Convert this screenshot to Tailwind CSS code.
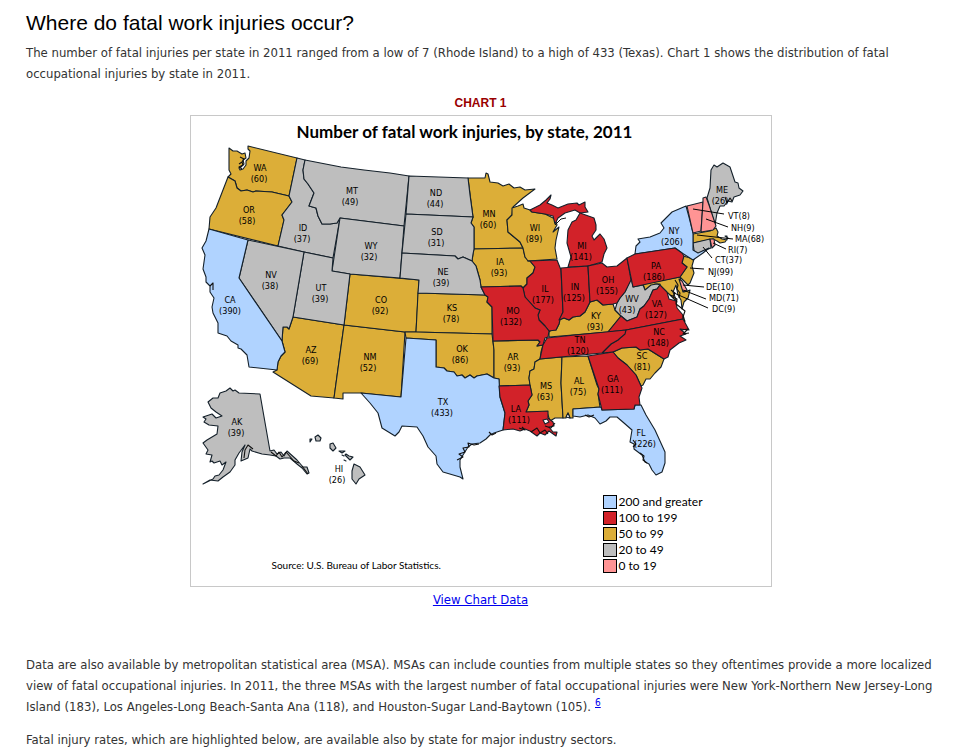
<!DOCTYPE html>
<html lang="en">
<head>
<meta charset="utf-8">
<meta name="viewport" content="width=device-width, initial-scale=1">
<title>Where do fatal work injuries occur?</title>
<script src="https://cdn.jsdelivr.net/npm/@tailwindcss/browser@4"></script>
</head>
<body class="bg-white">
<main class="px-[26px] pt-[9px] font-['DejaVu_Sans_Condensed',Verdana,sans-serif] text-[13px] leading-[21px] text-[#333]">
  <h1 class="font-['Liberation_Sans',Arial,sans-serif] text-[21px] leading-7 text-black">Where do fatal work injuries occur?</h1>
  <p class="mt-[5px]">The number of fatal injuries per state in 2011 ranged from a low of 7 (Rhode Island) to a high of 433 (Texas). Chart 1 shows the distribution of fatal occupational injuries by state in 2011.</p>
  <h2 class="mt-[9px] text-center font-['Liberation_Sans',Arial,sans-serif] text-[12px] font-bold text-[#900]">CHART 1</h2>
  <figure class="mx-auto mt-px w-full max-w-[582px] border border-[#c8c8c8] pt-1 pb-3 font-[Lato,sans-serif] text-black">
    <figcaption class="pr-8 text-center text-[17px] leading-6 font-bold">Number of fatal work injuries, by state, 2011</figcaption>
    <svg class="block w-full" viewBox="191 144 580 350" role="img" aria-label="Map of fatal work injuries by state">
      <g stroke="#14202a" stroke-width="1.1" stroke-linejoin="round">
        <g fill="#dcae38">
          <path d="M229 148L233 151 237 151 242 154 245 153 246 158 243 160 244 164 241 167 239 168 240 170 243 169 246 165 246 161 249 158 250 151 248 149 248 146 297 158 289 196 272 192 256 191 253 192 247 190 241 191 237 188 235 181 228 177 231 174 229 170Z"/>
          <path d="M228 177L235 181 237 188 241 191 247 190 253 192 256 191 272 192 289 196 292 202 282 215 284 220 278 246 209 229 210 217 216 208Z"/>
          <path d="M293 317L344 325 334 398 311 396 273 372 277 370 278 362 281 356 285 352 282 341 283 327 287 327 289 329Z"/>
          <path d="M344 325L405 332 401 397 361 393 343 393 343 399 334 398Z"/>
          <path d="M350 274L419 280 416 332 405 332 344 325Z"/>
          <path d="M418 293L485 295 488 297 487 302 492 307 492 334 416 332Z"/>
          <path d="M405 332L416 332 492 334 494 350 494 378 487 374 477 376 474 378 470 375 465 378 462 375 457 376 454 372 447 371 444 368 436 367 436 340 406 338Z"/>
          <path d="M468 178L485 178 486 173 488 174 490 182 498 183 503 186 509 184 514 188 520 187 525 190 535 189 523 198 513 207 512 215 507 220 508 232 520 242 523 248 474 249 474 227 471 223 473 217Z"/>
          <path d="M474 249L523 248 525 257 530 261 535 267 533 273 527 278 527 284 523 288 521 286 481 287 480 280 476 266 472 261 473 254Z"/>
          <path d="M512 208L518 206 523 204 524 208 530 210 532 212 545 214 555 219 557 225 553 232 559 227 556 240 555 248 557 259 528 261 525 257 523 248 520 242 508 232 507 220 512 215Z"/>
          <path d="M493 341L538 340 540 342 537 346 543 345 541 352 540 359 535 362 534 369 530 371 529 378 530 385 499 386 499 379 494 378 494 350Z"/>
          <path d="M540 359L562 357 561 383 563 418 555 418 550 421 547 412 526 412 529 405 528 401 532 395 530 385 529 378 530 371 534 369 535 362Z"/>
          <path d="M562 357L588 356 597 385 599 389 598 394 600 407 573 409 573 418 570 418 568 413 566 418 563 418 561 383Z"/>
          <path d="M613 352L622 348 636 347 640 350 648 349 664 359 661 367 655 373 650 379 646 379 643 385 641 386 636 375 627 365 618 358Z"/>
          <path d="M549 337L549 332 551 330 556 330 559 324 559 320 564 318 569 320 573 317 580 316 585 312 590 302 597 300 603 305 613 304 615 310 621 316 608 332Z"/>
          <path d="M683 256L694 259 692 266 694 273 690 283 688 285 683 280 680 277 687 267 682 263Z"/>
          <path d="M643 284L680 277 684 292 690 290 688 298 684 302 682 309 681 300 678 295 676 285 673 292 677 302 672 297 668 293 660 289 660 284 655 284 645 290Z"/>
          <path d="M693 234L710 231 716 228 718 232 717 236 722 239 727 240 727 236 725 236 728 238 725 242 720 243 717 241 713 239 693 243Z"/>
        </g>
        <g fill="#bebebe">
          <path d="M297 158L305 160 303 170 304 179 308 184 314 193 309 206 316 208 318 216 322 224 330 224 337 223 340 218 333 258 304 252 278 246 284 220 282 215 292 202 289 196Z"/>
          <path d="M305 160L341 167 364 170 390 173 409 176 404 226 340 218 337 223 330 224 322 224 318 216 316 208 309 206 314 193 308 184 304 179 303 170Z"/>
          <path d="M340 218L404 226 400 278 350 274 332 271Z"/>
          <path d="M304 252L333 258 332 271 350 274 344 325 293 317Z"/>
          <path d="M248 240L304 252 293 317 289 329 287 327 283 327 282 341 239 278Z"/>
          <path d="M409 176L468 178 470 195 473 217 406 214Z"/>
          <path d="M406 214L473 217 471 223 474 227 474 249 473 254 472 261 463 257 458 259 455 256 402 253Z"/>
          <path d="M402 253L455 256 458 259 463 257 472 261 476 266 480 280 481 287 485 295 418 293 419 280 400 278Z"/>
          <path d="M631 278L633 287 643 285 645 290 651 285 657 284 660 285 657 289 653 290 649 299 644 306 640 309 637 317 627 321 621 316 615 310 617 303 620 298 625 292Z"/>
          <path d="M707 198L710 188 711 170 714 165 717 167 723 163 730 167 735 182 738 183 739 188 743 191 740 195 734 197 732 202 728 201 724 206 720 206 717 213 715 225Z"/>
          <path d="M693 243L710 239 711 248 703 251 695 257Z"/>
          <path d="M208 402L213 398 218 398 220 393 226 391 230 388 233 391 235 390 239 393 260 394 270 451 274 450 277 454 281 452 284 456 287 451 297 460 303 467 307 467 309 473 307 474 302 468 297 464 290 458 284 458 280 459 276 456 270 455 262 454 252 451 250 449 248 458 241 461 242 452 245 445 239 453 235 460 235 465 230 472 223 477 218 481 210 480 203 484 213 479 215 476 219 475 223 470 226 462 222 465 220 461 214 463 212 461 210 462 212 455 206 454 208 450 203 443 207 440 217 434 218 426 209 425 204 422 206 419 203 417 212 414 216 418 222 416 216 412 211 408Z"/>
          <path d="M310 439l2 0-2 3zM315 437l3-2 3 3-1 3-4 0zM330 444l3-1 3 5-3 3-3-3zM339 451l6 0-3 2zM342 455l2 1zM346 454l3 2 4 1-3 3-2-2-3-3zM344 460l2 1zM354 464l6 3 5 8-6 4-3 5-4-5 0-8z"/>
        </g>
        <g fill="#b0d3ff">
          <path d="M209 229L248 240 239 278 282 341 285 352 281 356 278 362 277 370 249 367 247 355 241 349 238 348 238 345 231 341 227 336 218 333 218 323 213 313 212 307 214 298 210 292 210 286 206 282 206 277 203 269 205 255 202 248 206 241Z"/>
          <path d="M406 338L436 340 436 367 444 368 447 371 454 372 457 376 462 375 465 378 470 375 474 378 477 376 487 374 494 378 499 379 500 397 505 413 503 430 494 433 490 435 486 439 480 443 472 444 468 447 463 455 460 460 460 467 463 479 460 477 443 472 437 464 436 456 428 447 423 436 417 427 402 426 399 432 395 436 382 428 378 413 370 403 361 393 401 397Z"/>
          <path d="M573 409L601 407 602 410 634 409 635 405 641 405 646 415 655 430 665 452 665 463 662 472 656 475 652 470 649 464 645 462 642 455 634 449 634 444 630 442 632 430 624 423 617 417 610 417 606 421 600 424 595 418 588 415 580 417 573 416Z"/>
          <path d="M635 254L636 246 640 242 638 239 650 237 660 233 664 228 661 223 672 212 686 206 689 217 693 233 693 250 698 253 709 248 703 253 693 260 682 253 675 248Z"/>
        </g>
        <g fill="#d22229">
          <path d="M530 210L540 205 546 200 551 195 550 199 547 203 552 205 558 208 568 204 577 203 579 205 585 202 585 207 588 212 580 213 575 210 565 213 558 218 555 224 553 216 545 214 532 212Z"/>
          <path d="M580 213L594 218 596 225 596 230 592 236 594 240 600 234 604 239 607 248 604 254 602 262 588 266 568 267 571 257 567 243 568 230 572 222 576 220Z"/>
          <path d="M528 261L557 260 561 270 563 312 560 320 559 324 556 330 549 331 545 326 539 320 538 315 540 310 535 308 525 297 523 288 527 284 527 278 533 273 535 267 530 261Z"/>
          <path d="M481 287L521 286 523 288 525 297 535 308 540 310 538 315 539 320 545 326 549 331 548 337 545 338 543 345 537 346 540 342 538 340 493 341 492 307 487 302 488 297 485 295Z"/>
          <path d="M561 268L588 266 590 302 585 312 580 316 573 317 569 320 564 318 559 320 563 312Z"/>
          <path d="M588 266L602 263 607 267 617 266 627 258 631 280 625 292 620 298 617 303 613 304 603 305 597 300 590 302Z"/>
          <path d="M627 258L635 254 675 248 682 253 684 256 682 263 687 267 680 277 633 287Z"/>
          <path d="M608 332L621 316 627 321 637 317 640 309 644 306 649 299 653 290 657 289 660 285 667 292 669 299 676 301 677 308 683 315 683 319 626 330Z"/>
          <path d="M626 330L683 319 689 330 680 329 686 334 680 336 686 340 679 343 670 350 668 357 664 359 648 349 640 350 636 347 622 348 613 352 602 353 611 344 618 340Z"/>
          <path d="M547 338L575 335 626 330 625 334 618 340 611 344 602 353 540 359 543 345Z"/>
          <path d="M588 356L613 352 618 358 627 365 636 375 641 386 642 388 639 397 640 405 635 405 634 409 602 410 598 394 599 389Z"/>
          <path d="M499 386L530 385 532 395 528 401 529 405 526 412 548 411 548 418 553 422 554 426 549 427 553 432 557 432 556 436 549 431 545 435 540 433 537 436 530 431 525 429 520 431 513 429 503 430 505 413 500 397Z"/>
        </g>
        <g fill="#ff9494">
          <path d="M687 206L703 202 701 231 693 233Z"/>
          <path d="M703 198L706 197 709 205 716 226 713 230 701 232 703 202Z"/>
          <path d="M710 239L714 239 715 245 712 248Z"/>
          <path d="M679 279L682 281 687 290 683 292Z"/>
        </g>
        <!-- inlets, sounds and barrier islands -->
        <g fill="none" stroke="#111">
          <path d="M239 164l3-2 1 3-4 2 3 2M240 157l4 2-2 3M210 286l3-3 0 7M683 315l2 7M680 307l5 4-2 6 2 4M671 290l4 3-2 4 4 2-1 5 4 3M675 280l3 5-1 4 3 4-1 5M457 460l6-3-4-3 6-2-2-4 6-1-1-4 6 2 5-1M489 432l3 3 4-2M519 428l6 2-3-3M531 432l6-4 3 5 5-3 3 4M545 426l6 2 4-5M633 440l3 4-3 3M640 453l4 3-1 4 4 3M585 415l4 2 5-2M682 330l6-1-5 5 6-1M253 449l-5-4-3 5-1 8M271 452l5 4 3-4 3 5 4-5M286 452l8 9 5 2M302 466l6 8M670 295l3 1M725 197l2 6 3-5 2 3"/>
          <path d="M555 225l6-6 5-1" stroke-width="1"/>
        </g>
        <path d="M543 420l4-1 2 3-4 2zM566 417l2-4 2 5z" fill="#fff"/>
        <g fill="none" stroke="#050505" stroke-width="1">
          <path d="M693 209L724 214M706 219L728 227M697 235L733 239M713 243L726 249M703 247L712 258M690 268L704 269M683 285L704 287M683 290L706 299M674 293L708 308"/>
        </g>
      </g>
      <g class="font-['DejaVu_Sans_Condensed','Noto_Sans',Tahoma,sans-serif] text-[9px]" fill="#000" text-anchor="middle">
        <text x="260" y="171">WA<tspan x="259" y="182">(60)</tspan></text>
        <text x="249" y="213">OR<tspan x="247" y="224">(58)</tspan></text>
        <text x="303" y="231">ID<tspan x="302" y="242">(37)</tspan></text>
        <text x="352" y="194">MT<tspan x="350" y="205">(49)</tspan></text>
        <text x="371" y="249">WY<tspan x="369" y="260">(32)</tspan></text>
        <text x="271" y="278">NV<tspan x="270" y="289">(38)</tspan></text>
        <text x="230" y="303">CA<tspan x="230" y="314">(390)</tspan></text>
        <text x="321" y="291">UT<tspan x="320" y="302">(39)</tspan></text>
        <text x="381" y="303">CO<tspan x="380" y="314">(92)</tspan></text>
        <text x="311" y="353">AZ<tspan x="310" y="364">(69)</tspan></text>
        <text x="370" y="360">NM<tspan x="368" y="371">(52)</tspan></text>
        <text x="436" y="196">ND<tspan x="435" y="207">(44)</tspan></text>
        <text x="437" y="235">SD<tspan x="436" y="246">(31)</tspan></text>
        <text x="443" y="275">NE<tspan x="441" y="286">(39)</tspan></text>
        <text x="452" y="311">KS<tspan x="451" y="322">(78)</tspan></text>
        <text x="462" y="352">OK<tspan x="460" y="363">(86)</tspan></text>
        <text x="443" y="405">TX<tspan x="442" y="416">(433)</tspan></text>
        <text x="489" y="217">MN<tspan x="488" y="228">(60)</tspan></text>
        <text x="500" y="265">IA<tspan x="499" y="276">(93)</tspan></text>
        <text x="535" y="231">WI<tspan x="534" y="242">(89)</tspan></text>
        <text x="513" y="314">MO<tspan x="511" y="325">(132)</tspan></text>
        <text x="513" y="360">AR<tspan x="512" y="371">(93)</tspan></text>
        <text x="516" y="412">LA<tspan x="519" y="423">(111)</tspan></text>
        <text x="546" y="389">MS<tspan x="545" y="400">(63)</tspan></text>
        <text x="579" y="384">AL<tspan x="578" y="395">(75)</tspan></text>
        <text x="613" y="382">GA<tspan x="612" y="393">(111)</tspan></text>
        <text x="641" y="436">FL<tspan x="645" y="447">(226)</tspan></text>
        <text x="642" y="359">SC<tspan x="642" y="370">(81)</tspan></text>
        <text x="659" y="335">NC<tspan x="658" y="346">(148)</tspan></text>
        <text x="580" y="343">TN<tspan x="578" y="354">(120)</tspan></text>
        <text x="596" y="319">KY<tspan x="595" y="330">(93)</tspan></text>
        <text x="657" y="307">VA<tspan x="656" y="318">(127)</tspan></text>
        <text x="632" y="302">WV<tspan x="627" y="313">(43)</tspan></text>
        <text x="545" y="292">IL<tspan x="543" y="303">(177)</tspan></text>
        <text x="575" y="290">IN<tspan x="574" y="301">(125)</tspan></text>
        <text x="608" y="283">OH<tspan x="607" y="294">(155)</tspan></text>
        <text x="582" y="249">MI<tspan x="581" y="260">(141)</tspan></text>
        <text x="656" y="269">PA<tspan x="654" y="280">(186)</tspan></text>
        <text x="674" y="234">NY<tspan x="672" y="245">(206)</tspan></text>
        <text x="722" y="193">ME<tspan x="720" y="204">(26)</tspan></text>
        <text x="237" y="425">AK<tspan x="236" y="436">(39)</tspan></text>
        <text x="339" y="472">HI<tspan x="337" y="483">(26)</tspan></text>
        <g text-anchor="start">
          <text x="728" y="219">VT(8)</text>
          <text x="731" y="231">NH(9)</text>
          <text x="735" y="242">MA(68)</text>
          <text x="728" y="253">RI(7)</text>
          <text x="715" y="263">CT(37)</text>
          <text x="708" y="275">NJ(99)</text>
          <text x="706" y="290">DE(10)</text>
          <text x="709" y="301">MD(71)</text>
          <text x="712" y="312">DC(9)</text>
        </g>
      </g>
    </svg>
    <div class="flex items-end justify-between pr-[68px] pl-[81px]">
      <p class="text-[10px] leading-[18px]">Source: U.S. Bureau of Labor Statistics.</p>
      <ul class="text-[12px] leading-4">
        <li class="flex items-center gap-0.5"><span class="size-3.5 border border-black bg-[#b0d3ff]"></span>200 and greater</li>
        <li class="flex items-center gap-0.5"><span class="size-3.5 border border-black bg-[#d22229]"></span>100 to 199</li>
        <li class="flex items-center gap-0.5"><span class="size-3.5 border border-black bg-[#dcae38]"></span>50 to 99</li>
        <li class="flex items-center gap-0.5"><span class="size-3.5 border border-black bg-[#bebebe]"></span>20 to 49</li>
        <li class="flex items-center gap-0.5"><span class="size-3.5 border border-black bg-[#ff9494]"></span>0 to 19</li>
      </ul>
    </div>
  </figure>
  <p class="mt-0.5 text-center"><a href="#" class="text-[#00e] underline">View Chart Data</a></p>
  <p class="mt-11">Data are also available by metropolitan statistical area (MSA). MSAs can include counties from multiple states so they oftentimes provide a more localized view of fatal occupational injuries. In 2011, the three MSAs with the largest number of fatal occupational injuries were New York-Northern New Jersey-Long Island (183), Los Angeles-Long Beach-Santa Ana (118), and Houston-Sugar Land-Baytown (105).<sup class="ml-1 text-[10px]"><a href="#" class="text-[#00e] underline">6</a></sup></p>
  <p class="mt-3">Fatal injury rates, which are highlighted below, are available also by state for major industry sectors.</p>
</main>
</body>
</html>
